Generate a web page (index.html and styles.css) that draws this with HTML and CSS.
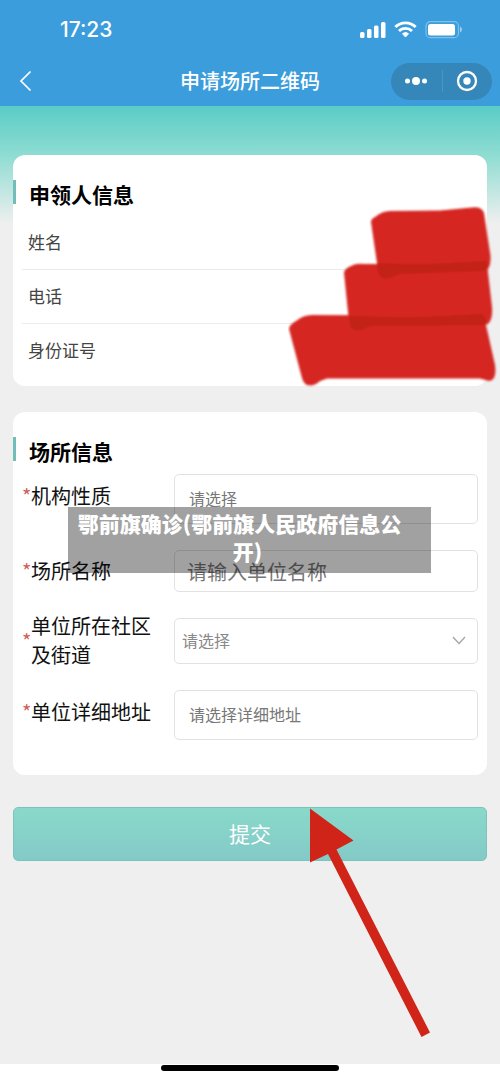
FILE: index.html
```html
<!DOCTYPE html>
<html lang="zh-CN">
<head>
<meta charset="utf-8">
<meta name="viewport" content="width=device-width, initial-scale=1">
<title>申请场所二维码</title>
<link rel="stylesheet" href="styles.css">
</head>
<body>
<div class="page">
  <header class="header">
    <div class="status">
      <span class="time">17:23</span>
      <svg class="status-icons" width="104" height="20" viewBox="0 0 104 20" aria-hidden="true">
        <g fill="#fff">
          <rect x="0" y="12" width="4.500" height="6" rx="1.500"/>
          <rect x="7" y="9" width="4.500" height="9" rx="1.500"/>
          <rect x="14" y="5.500" width="4.500" height="12.500" rx="1.500"/>
          <rect x="21" y="2" width="4.500" height="16" rx="1.500"/>
          <path d="M42.500 13.700a4.600 4.600 0 0 1 6 0L45.500 17Z" stroke="#fff" stroke-width="1" stroke-linejoin="round"/>
          <rect x="68" y="4" width="27" height="11.500" rx="2.500"/>
          <path d="M100 6.500q2 1 2 3t-2 3z" opacity=".5"/>
        </g>
        <g fill="none" stroke="#fff" stroke-width="2.800">
          <path d="M35.300 7a14.500 14.500 0 0 1 20.400 0"/>
          <path d="M39 11a9.200 9.200 0 0 1 13 0"/>
        </g>
        <rect x="66" y="1.700" width="32.500" height="16" rx="4.500" fill="none" stroke="#fff" stroke-opacity=".35" stroke-width="1.200"/>
      </svg>
    </div>
    <nav class="nav">
      <button class="back" type="button" aria-label="返回">
        <svg width="14" height="22" viewBox="0 0 14 22"><path d="M11.500 1.500 2 11l9.500 9.500" fill="none" stroke="#fff" stroke-width="1.700"/></svg>
      </button>
      <h1 class="title">申请场所二维码</h1>
      <div class="capsule">
        <button type="button" aria-label="更多">
          <svg width="24" height="10" viewBox="0 0 24 10" fill="#fff"><circle cx="3.500" cy="5" r="2.500"/><circle cx="12" cy="5" r="4"/><circle cx="20.500" cy="5" r="2.500"/></svg>
        </button>
        <button type="button" aria-label="关闭">
          <svg width="22" height="22" viewBox="0 0 22 22"><circle cx="11" cy="11" r="9" fill="none" stroke="#fff" stroke-width="2.300"/><circle cx="11" cy="11" r="3.700" fill="#fff"/></svg>
        </button>
      </div>
    </nav>
  </header>

  <main class="main">
    <section class="card applicant">
      <h2 class="heading">申领人信息</h2>
      <dl class="rows">
        <div class="row"><dt>姓名</dt></div>
        <div class="row"><dt>电话</dt></div>
        <div class="row"><dt>身份证号</dt></div>
      </dl>
      <svg class="redaction" width="210" height="182" viewBox="288 206 210 182" aria-hidden="true">
        <defs><filter id="soft" x="-5%" y="-5%" width="110%" height="110%"><feGaussianBlur stdDeviation=".8"/></filter></defs>
        <g filter="url(#soft)" fill="#d52720">
          <path d="M371 222Q371 219 375 217Q382 211 390 211L440 210.500L472 207.500Q482 206.500 484 213L490.500 256Q491 268 486 271L392 276Q380 283 378 270Z"/>
          <path d="M344 273Q344 269 351 266Q356 263 364 264L487 264L492 307Q493 322 486 325L366 327Q352 335 349 322Z"/>
          <path d="M289 329Q289 325 296 321Q303 315 312 315L484 316L495 365Q497 380 489 381L480 378.500L327 378.500Q321 380 316 384Q305 389 302 378Z"/>
          <path d="M377 263Q420 266 486 261Q490 270 482 271L399 274Q382 284 378 272Z" fill="#c32217"/>
          <path d="M349 316Q420 319 482 314Q490 323 482 325L370 326Q353 335 350 325Z" fill="#c32217"/>
        </g>
      </svg>
    </section>

    <form class="form">
      <section class="card">
        <h2 class="heading">场所信息</h2>
        <div class="fields">
          <div class="field raised">
            <label for="kind"><span class="star">*</span><span>机构性质</span></label>
            <input id="kind" class="control tall" type="text" placeholder="请选择">
          </div>
          <div class="field">
            <label for="place"><span class="star">*</span><span>场所名称</span></label>
            <input id="place" class="control large" type="text" placeholder="请输入单位名称">
          </div>
          <div class="field">
            <label for="area"><span class="star">*</span><span>单位所在社区及街道</span></label>
            <div class="select">
              <select id="area" class="control"><option>请选择</option></select>
              <svg class="chevron" width="14" height="9" viewBox="0 0 14 9" aria-hidden="true"><path d="M1 1l6 6.500L13 1" fill="none" stroke="#a5a5a5" stroke-width="1.300"/></svg>
            </div>
          </div>
          <div class="field raised">
            <label for="address"><span class="star">*</span><span>单位详细地址</span></label>
            <input id="address" class="control tall" type="text" placeholder="请选择详细地址">
          </div>
        </div>
      </section>
      <button class="submit" type="button">提交</button>
    </form>
  </main>

  <footer class="footer"><div class="home"></div></footer>

  <p class="caption">鄂前旗确诊(鄂前旗人民政府信息公开)</p>
  <svg class="arrow" width="122" height="230" viewBox="309 808 122 230" aria-hidden="true">
    <path d="M310 808.500 353.500 840.500 336.500 849.500 430 1032.500 421.500 1037 328 854 310 862.500Z" fill="#d02418"/>
  </svg>
</div>
</body>
</html>
```
FILE: styles.css
```css
* {
  box-sizing: border-box;
}

body {
  margin: 0;
  font-family: "Noto Sans CJK SC", "Liberation Sans", sans-serif;
  color: #111;
  background: #fff;
}

button,
input,
select {
  font-family: inherit;
}

h1,
h2,
dl,
p {
  margin: 0;
}

button {
  padding: 0;
  border: 0;
  background: none;
}

svg {
  display: block;
}

.page {
  position: relative;
  display: flex;
  flex-direction: column;
  min-height: 100vh;
}

.header {
  background: #3c9ddc;
  color: #fff;
}

.status {
  display: flex;
  align-items: center;
  justify-content: space-between;
  height: 56px;
  padding: 4px 36px 0 60px;
}

.time {
  font: 500 21px/24px Inter, sans-serif;
}

.nav {
  display: grid;
  grid-template-columns: 1fr auto 1fr;
  align-items: center;
  height: 50px;
  padding: 0 8px 0 19px;
}

.back {
  justify-self: start;
}

.title {
  font-size: 20px;
  line-height: 30px;
  font-weight: 500;
  padding-right: 11px;
}

.capsule {
  justify-self: end;
  display: grid;
  grid-template-columns: 1fr 1fr;
  width: 101px;
  height: 37px;
  border-radius: 19px;
  background: #3687b9;
}

.capsule button {
  display: flex;
  align-items: center;
  justify-content: center;
}

.capsule button + button {
  background: linear-gradient(#4a96c5, #4a96c5) left center / 1px 22px no-repeat;
}

.main {
  flex: 1;
  padding: 49px 13px 32px;
  background: linear-gradient(#5accc6, #8ddcd2 48px, #efefef 118px) top / 100% 118px no-repeat #efefef;
}

.card {
  position: relative;
  padding: 25px 9px 35px;
  border-radius: 12px;
  background: #fff;
}

.applicant {
  padding-bottom: 8px;
  margin-bottom: 26px;
}

.heading {
  margin: 0 -9px;
  padding: 0 0 2px 16px;
  font-size: 21px;
  line-height: 28px;
  font-weight: 700;
  color: #000;
  background: linear-gradient(#73bdb9, #73bdb9) left top / 3px 24px no-repeat;
}

.rows {
  padding-top: 6px;
}

.row {
  height: 54px;
  padding: 0 6px;
  font-size: 17px;
  line-height: 51px;
  color: #444;
  border-bottom: 1px solid #ececec;
}

.row:last-child {
  border-bottom: 0;
}

.redaction {
  position: absolute;
  top: 51px;
  right: -11px;
}

.fields {
  display: grid;
  gap: 26px;
  padding-top: 7px;
}

.field {
  display: grid;
  grid-template-columns: 152px 1fr;
  align-items: center;
}

label {
  display: grid;
  grid-template-columns: 9px 1fr;
  align-items: center;
  margin: -8px 0;
  padding: 0 20px 2px 0;
  font-size: 20px;
  line-height: 29px;
}

.raised label {
  padding-bottom: 8px;
}

.star {
  color: #d0605c;
}

.control {
  display: block;
  width: 100%;
  height: 46px;
  padding: 0 7px 2px;
  border: 1px solid #e2e2e2;
  border-radius: 5px;
  background: #fff;
  color: #888;
  font-size: 16px;
  appearance: none;
}

.control::placeholder {
  color: #777;
  opacity: 1;
}

.tall {
  height: 50px;
  padding: 0 14px 2px;
}

.large {
  height: 42px;
  padding: 0 12px;
  font-size: 20px;
}

.select {
  position: relative;
}

.chevron {
  position: absolute;
  top: 18px;
  right: 12px;
  pointer-events: none;
}

.submit {
  display: block;
  width: 100%;
  height: 54px;
  margin-top: 32px;
  padding-bottom: 2px;
  border: 1px solid #7cc4bb;
  border-radius: 5px;
  background: linear-gradient(#89d9ca, #84cac8);
  color: #fff;
  font-size: 21px;
  line-height: 30px;
}

.footer {
  height: 17px;
  padding-top: 1px;
  background: #fff;
}

.home {
  width: 178px;
  height: 6px;
  margin: 0 auto;
  border-radius: 3px;
  background: #000;
}

.caption {
  position: absolute;
  top: 507px;
  left: 50%;
  width: 363px;
  margin-left: -182px;
  padding: 2px 20px 8px 16px;
  background: rgba(0, 0, 0, 0.37);
  color: #fff;
  font-size: 21px;
  line-height: 28px;
  font-weight: 900;
  text-align: center;
  text-indent: -16px;
}

.arrow {
  position: absolute;
  top: 808px;
  left: 50%;
  margin-left: 59px;
}
```
